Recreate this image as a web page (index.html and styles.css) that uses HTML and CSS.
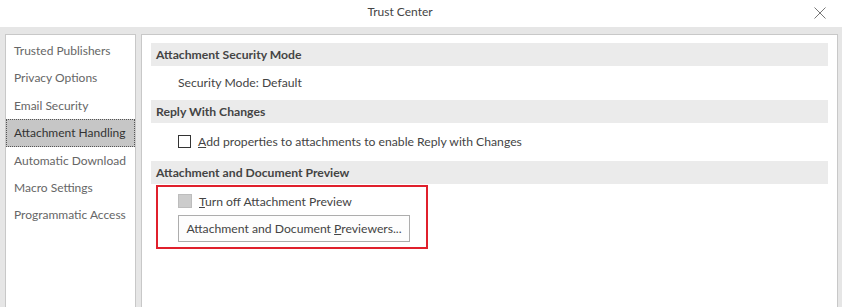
FILE: index.html
```html
<!DOCTYPE html>
<html lang="en">
<head>
    <meta charset="UTF-8">
    <title>Trust Center</title>
    <link rel="stylesheet" href="styles.css">
</head>
<body>
    <div class="dialog">
        <div class="title-bar">
            <span class="title">Trust Center</span>
            <span class="close">
                <svg width="12" height="12" viewBox="0 0 12 12">
                    <path d="M0.5 0.5 L11.5 11.5 M11.5 0.5 L0.5 11.5" stroke="#777" stroke-width="1" fill="none"/>
                </svg>
            </span>
        </div>
        <div class="main">
            <ul class="nav">
                <li>Trusted Publishers</li>
                <li>Privacy Options</li>
                <li>Email Security</li>
                <li class="active">Attachment Handling</li>
                <li>Automatic Download</li>
                <li>Macro Settings</li>
                <li>Programmatic Access</li>
            </ul>
            <div class="content">
                <div class="band">Attachment Security Mode</div>
                <div class="section mode">Security Mode: Default</div>

                <div class="band">Reply With Changes</div>
                <div class="section reply">
                    <label class="check-row">
                        <span class="box"></span>
                        <span><u>A</u>dd properties to attachments to enable Reply with Changes</span>
                    </label>
                </div>

                <div class="band">Attachment and Document Preview</div>
                <div class="highlight">
                    <label class="check-row">
                        <span class="box disabled"></span>
                        <span><u>T</u>urn off Attachment Preview</span>
                    </label>
                    <button class="btn">Attachment and Document <u>P</u>reviewers...</button>
                </div>
            </div>
        </div>
    </div>
</body>
</html>
```

FILE: styles.css
```css
html, body {
    margin: 0; padding: 0;
    background: #fff;
    font-family: Lato, "Open Sans", sans-serif;
    font-size: 12px;
    color: #444;
}

.dialog {
    height: 307px;
    display: flex;
    flex-direction: column;
    overflow: hidden;
}

.title-bar {
    position: relative;
    height: 27px;
    display: flex;
    align-items: center;
    justify-content: center;
    padding-right: 42px;
    flex-shrink: 0;
}
    .title-bar .title {
        color: #444;
        font-size: 12px;
        margin-top: -4px;
    }
    .title-bar .close {
        position: absolute;
        right: 16px; top: 7px;
        display: flex;
    }

.main {
    flex: 1;
    display: flex;
    gap: 5px;
    background: #e6e6e6;
    padding: 7px 4px 0 5px;
}

.nav {
    list-style: none;
    margin: 0;
    padding: 2px 0 0 0;
    width: 131px;
    height: 300px;
    box-sizing: border-box;
    background: #fff;
    border: 1px solid #c8c8c8;
    display: flex;
    flex-direction: column;
}
    .nav li {
        height: 27.4px;
        box-sizing: border-box;
        line-height: 25px;
        padding-left: 7px;
        color: #666;
        border: 1px solid transparent;
        white-space: nowrap;
    }
    .nav li.active {
        background: #c6c6c6;
        border: 1px dotted #555;
        color: #333;
    }

.content {
    flex: 1;
    height: 300px;
    box-sizing: border-box;
    background: #fff;
    border: 1px solid #c8c8c8;
    padding: 8px 9px 0 9px;
    font-size: 12.2px;
}

.band {
    height: 23px;
    line-height: 23px;
    background: #ebebeb;
    padding-left: 5px;
    font-weight: bold;
    color: #444;
}

.section {
    padding-left: 27px;
    color: #444;
}
    .section.mode {
        height: 34px;
        line-height: 33px;
    }
    .section.reply {
        height: 38px;
        display: flex;
        align-items: center;
        padding-bottom: 1px;
        box-sizing: border-box;
    }

.check-row {
    display: flex;
    align-items: center;
    gap: 7px;
    height: 18px;
    color: #444;
}
    .check-row .box {
        width: 11px; height: 11px;
        border: 1px solid #333;
        background: #fff;
    }
    .check-row .box.disabled {
        width: 12px; height: 12px;
        border: 1px solid #bdbdbd;
        background: #cccccc;
    }

.highlight {
    width: 272px;
    margin: 1px 0 0 5px;
    box-sizing: border-box;
    border: 2px solid #e0202c;
    padding: 5px 0 5px 20px;
    display: flex;
    flex-direction: column;
    gap: 5px;
}

.btn {
    width: 232px;
    height: 27px;
    border: 1px solid #adadad;
    background: #fdfdfd;
    font-family: inherit;
    font-size: 12.2px;
    color: #444;
    padding: 0;
}
```
